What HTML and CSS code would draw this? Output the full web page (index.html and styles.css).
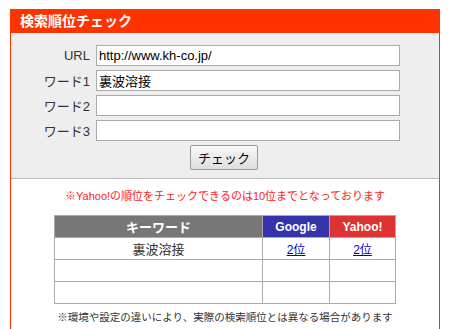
FILE: index.html
```html
<html>
    <head>
        <title>検索順位チェック</title>
        <meta name="viewport" content="width=device-width, initial-scale=1.0">
        <link rel="stylesheet" href="styles.css">
    </head>
    <body>
        <div class="box">
            <h2 class="box-title">検索順位チェック</h2>
            <form class="check-form" onsubmit="return false">
                <div class="row">
                    <label for="url">URL</label>
                    <input type="text" id="url" value="http://www.kh-co.jp/" />
                </div>
                <div class="row">
                    <label for="word1">ワード1</label>
                    <input type="text" id="word1" value="裏波溶接" />
                </div>
                <div class="row">
                    <label for="word2">ワード2</label>
                    <input type="text" id="word2" />
                </div>
                <div class="row">
                    <label for="word3">ワード3</label>
                    <input type="text" id="word3" />
                </div>
                <div class="actions">
                    <button type="submit" class="check-button">チェック</button>
                </div>
            </form>
            <div class="result">
                <p class="notice">※Yahoo!の順位をチェックできるのは10位までとなっております</p>
                <table class="rank-table">
                    <tr>
                        <th class="col-word">キーワード</th>
                        <th class="col-google">Google</th>
                        <th class="col-yahoo">Yahoo!</th>
                    </tr>
                    <tr>
                        <td>裏波溶接</td>
                        <td><a href="#">2位</a></td>
                        <td><a href="#">2位</a></td>
                    </tr>
                    <tr>
                        <td></td>
                        <td></td>
                        <td></td>
                    </tr>
                    <tr>
                        <td></td>
                        <td></td>
                        <td></td>
                    </tr>
                </table>
                <p class="footnote">※環境や設定の違いにより、実際の検索順位とは異なる場合があります</p>
            </div>
        </div>
    </body>
</html>
```

FILE: styles.css
```css
body {
    margin: 9px 0 0 10px;
    background-color: #fff;
    color: #333;
    font-family: 'Liberation Sans', 'Noto Sans CJK JP', sans-serif;
    font-size: 13px;
    overflow: hidden;
}
.box {
    width: 428px;
    height: 320px;
    border: 1px solid #ff3300;
    border-top: none;
    border-bottom: none;
}
.box-title {
    margin: 0;
    height: 24px;
    line-height: 24px;
    padding-left: 9px;
    background-color: #ff3300;
    color: #fff;
    font-size: 14px;
    font-weight: bold;
}
.check-form {
    margin: 0;
    padding: 12px 0 8px 0;
    background-color: #eee;
    border-bottom: 1px solid #bbb;
}
.row {
    display: flex;
    align-items: center;
    gap: 6px;
    margin-bottom: 4px;
}
.row label {
    width: 79px;
    text-align: right;
    color: #333;
}
.row input {
    width: 304px;
    height: 21px;
    box-sizing: border-box;
    margin: 0;
    padding: 0 2px;
    border: 1px solid #aaa;
    background: #fff;
    color: #000;
    font-family: 'Liberation Sans', 'Noto Sans CJK JP', sans-serif;
    font-size: 13px;
}
.actions {
    display: flex;
    justify-content: center;
    padding-right: 2px;
}
.check-button {
    width: 68px;
    height: 25px;
    padding: 0;
    border: 1px solid #999;
    border-radius: 2px;
    background: linear-gradient(#f8f8f8, #dedede);
    color: #000;
    font-family: 'Noto Sans CJK JP', sans-serif;
    font-size: 13px;
    cursor: pointer;
}
.result {
    text-align: center;
}
.notice {
    margin: 10px 0 12px 0;
    color: #ff2222;
    font-size: 11px;
    line-height: 14px;
}
.rank-table {
    margin: 0 auto;
    width: 342px;
    border-collapse: collapse;
}
.rank-table th,
.rank-table td {
    height: 22px;
    padding: 0;
    border: 1px solid #aaa;
    text-align: center;
}
.rank-table th {
    color: #fff;
    font-weight: bold;
}
.col-word {
    width: 207px;
    background-color: #777;
    font-size: 13px;
}
.col-google {
    width: 66px;
    background-color: #3333aa;
    font-size: 12px;
}
.col-yahoo {
    background-color: #dd3333;
    font-size: 12px;
}
.rank-table td {
    color: #333;
    font-size: 13px;
}
.rank-table a {
    color: #0000cc;
    font-size: 12px;
}
.footnote {
    margin: 5px 0 0 0;
    font-size: 10.5px;
    letter-spacing: 0px;
    color: #333;
}
```
